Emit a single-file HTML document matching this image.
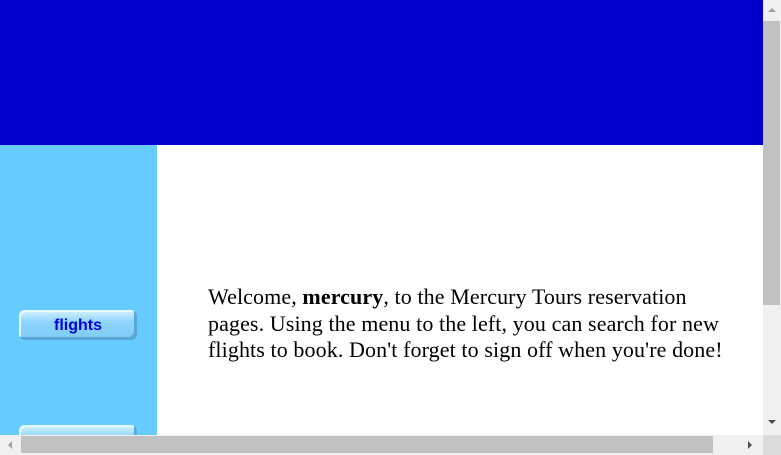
<!DOCTYPE html>
<html><head><style>
body{margin:0;width:781px;height:455px;overflow:hidden;position:relative;background:#fff;font-family:"Liberation Serif",serif}
.hdr{position:absolute;left:0;top:0;width:763px;height:145px;background:#0000cc}
.side{position:absolute;left:0;top:145px;width:157px;height:290px;background:#66ccff}
.btn{position:absolute;left:19px;width:118px;height:30px;border-radius:6px;background:linear-gradient(#d8f2ff,#8fd6ff 40%,#7ccbf5);box-shadow:inset -3px -3px 0 #5aa8d8,inset 2px 2px 0 #e8f8ff;font-family:"Liberation Sans",sans-serif;font-weight:bold;font-size:16px;color:#0000dd;text-align:center;line-height:31px}
.txt{position:absolute;left:208px;top:284px;width:530px;font-size:22px;letter-spacing:0.1px;line-height:26.5px;color:#000}
.vs{position:absolute;left:763px;top:0;width:18px;height:435px;background:#f0f0f0}
.vt{position:absolute;left:763px;top:21px;width:17px;height:284px;background:#c1c1c1}
.hs{position:absolute;left:0;top:435px;width:763px;height:20px;background:#f0f0f0}
.ht{position:absolute;left:21px;top:436px;width:692px;height:17px;background:#c1c1c1}
.cor{position:absolute;left:763px;top:435px;width:18px;height:20px;background:#dcdcdc}
.a{position:absolute;width:0;height:0}
</style></head><body>
<div class="hdr"></div>
<div class="side"></div>
<div class="btn" style="top:310px">flights</div>
<div class="btn" style="top:425px"></div>
<div class="txt">Welcome, <b>mercury</b>, to the Mercury Tours reservation pages. Using the menu to the left, you can search for new flights to book. Don't forget to sign off when you're done!</div>
<div class="vs"></div><div class="vt"></div>
<div class="hs"></div><div class="ht"></div><div class="cor"></div>
<div class="a" style="left:768px;top:8px;border:4px solid transparent;border-bottom:4px solid #a3a3a3;border-top:0"></div>
<div class="a" style="left:768px;top:420px;border:4px solid transparent;border-top:4px solid #505050;border-bottom:0"></div>
<div class="a" style="left:8px;top:441px;border:4px solid transparent;border-right:4px solid #a3a3a3;border-left:0"></div>
<div class="a" style="left:748px;top:441px;border:4px solid transparent;border-left:4px solid #505050;border-right:0"></div>
</body></html>
